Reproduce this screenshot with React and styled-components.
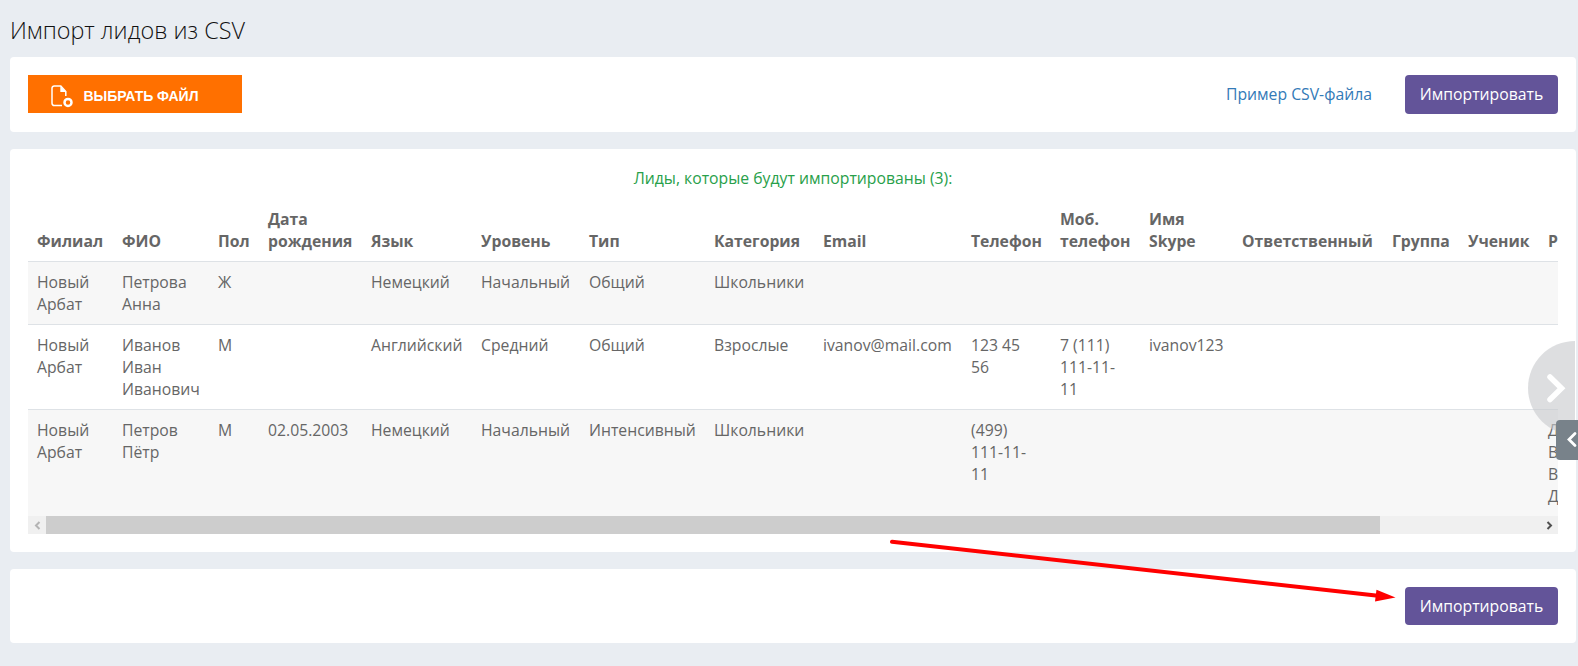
import React from 'react';
import styled, { createGlobalStyle } from 'styled-components';

const columns = [
    { title: 'Филиал', width: 85 },
    { title: 'ФИО', width: 96 },
    { title: 'Пол', width: 50 },
    { title: 'Дата рождения', width: 103 },
    { title: 'Язык', width: 110 },
    { title: 'Уровень', width: 108 },
    { title: 'Тип', width: 125 },
    { title: 'Категория', width: 109 },
    { title: 'Email', width: 148 },
    { title: 'Телефон', width: 89 },
    { title: 'Моб. телефон', width: 89 },
    { title: 'Имя Skype', width: 93 },
    { title: 'Ответственный', width: 150 },
    { title: 'Группа', width: 76 },
    { title: 'Ученик', width: 80 },
    { title: 'Р', width: 200 },
];

const leads = [
    ['Новый Арбат', 'Петрова Анна', 'Ж', '', 'Немецкий', 'Начальный', 'Общий', 'Школьники', '', '', '', '', '', '', '', ''],
    ['Новый Арбат', 'Иванов Иван Иванович', 'М', '', 'Английский', 'Средний', 'Общий', 'Взрослые', 'ivanov@mail.com', '123 45\n56', '7 (111)\n111-11-\n11', 'ivanov123', '', '', '', ''],
    ['Новый Арбат', 'Петров Пётр', 'М', '02.05.2003', 'Немецкий', 'Начальный', 'Интенсивный', 'Школьники', '', '(499)\n111-11-\n11', '', '', '', '', '', 'Д\nВ\nВ\nД'],
];

const FileIcon = () => (
    <svg width="23" height="24" viewBox="0 0 23 24" fill="none" stroke="#fff">
        <path d="M12 21.5H4.2A2.2 2.2 0 0 1 2 19.300V4.200A2.2 2.2 0 0 1 4.200 2H10.800L15.800 7.500V12" strokeWidth="1.500" />
        <path d="M10.300 1.700V8H16.300Z" fill="#fff" stroke="none" />
        <circle cx="18" cy="18.400" r="3.500" fill="#ff7000" strokeWidth="2.500" />
    </svg>
);

const App = () => {
    return (
        <Page>
            <GlobalStyle />
            <Title>Импорт лидов из CSV</Title>
            <Panel $height={75}>
                <Toolbar>
                    <FileButton>
                        <FileIcon />
                        <span>ВЫБРАТЬ ФАЙЛ</span>
                    </FileButton>
                    <Actions>
                        <SampleLink href="#">Пример CSV-файла</SampleLink>
                        <ImportButton $height={39}>Импортировать</ImportButton>
                    </Actions>
                </Toolbar>
            </Panel>
            <Panel $height={403}>
                <Summary>Лиды, которые будут импортированы (3):</Summary>
                <TableScroll>
                    <Table>
                        <colgroup>
                            {columns.map((col) => (
                                <col key={col.title} style={{ width: col.width }} />
                            ))}
                        </colgroup>
                        <thead>
                            <tr>
                                {columns.map((col) => (
                                    <HeadCell key={col.title}>{col.title}</HeadCell>
                                ))}
                            </tr>
                        </thead>
                        <tbody>
                            {leads.map((lead, i) => (
                                <Row key={i}>
                                    {lead.map((value, j) => (
                                        <Cell key={j}>{value}</Cell>
                                    ))}
                                </Row>
                            ))}
                        </tbody>
                    </Table>
                </TableScroll>
                <ScrollBar>
                    <ScrollArrow $color="#b4b4b4">
                        <path d="M11.500 6L8 9.500L11.500 13" />
                    </ScrollArrow>
                    <Thumb />
                    <ScrollArrow $color="#505050">
                        <path d="M7.500 6L11 9.500L7.500 13" />
                    </ScrollArrow>
                </ScrollBar>
            </Panel>
            <Panel $height={74}>
                <Toolbar $end>
                    <ImportButton $height={38}>Импортировать</ImportButton>
                </Toolbar>
            </Panel>
            <ScrollHint>
                <svg width="47" height="94" viewBox="0 0 47 94">
                    <path d="M22 36L33.500 47.200L22 58.500" fill="none" stroke="#fff" strokeWidth="5.500" strokeLinecap="round" />
                </svg>
            </ScrollHint>
            <SideTab>
                <svg width="22" height="40" viewBox="0 0 22 40">
                    <path d="M19 13.500L13 19.500L19 25.500" fill="none" stroke="#fff" strokeWidth="2.800" strokeLinecap="round" />
                </svg>
            </SideTab>
            <Pointer width="1578" height="666" viewBox="0 0 1578 666">
                <path d="M892 541.800L1378 595.800" stroke="#f00" strokeWidth="4" strokeLinecap="round" />
                <path d="M1376.500 589.700L1395.500 597.400L1375 601.500Z" fill="#f00" />
            </Pointer>
        </Page>
    )
}

const GlobalStyle = createGlobalStyle`
* {
    box-sizing: border-box;
}
body {
    margin: 0;
    background: #e9edf2;
    overflow: hidden;
}
`

const Page = styled.div`
position: relative;
width: 1578px;
height: 666px;
padding: 0 2px 0 10px;
display: flex;
flex-direction: column;
gap: 17px;
overflow: hidden;
color: #666;
font-family: "Open Sans", "Noto Sans", sans-serif;
font-size: 15.75px;
line-height: 22px;
`

const Title = styled.h1`
margin: 0;
height: 40px;
padding-top: 14px;
font-size: 23.4px;
line-height: 32px;
font-weight: 300;
color: #111;
`

const Panel = styled.section`
flex: none;
height: ${({ $height }) => $height}px;
padding: 18px;
border-radius: 4px;
background: #fff;
`

const Toolbar = styled.div`
display: flex;
align-items: flex-start;
justify-content: ${({ $end }) => ($end ? 'flex-end' : 'space-between')};
`

const FileButton = styled.button`
display: flex;
align-items: center;
gap: 10.500px;
width: 213.500px;
height: 38px;
padding: 4px 0 0 22px;
border: 0;
background: #ff7000;
color: #fff;
font: bold 14px/20px "Liberation Sans", Arial, sans-serif;
letter-spacing: -0.050px;
white-space: nowrap;
`

const Actions = styled.div`
display: flex;
align-items: flex-start;
gap: 33px;
`

const SampleLink = styled.a`
padding-top: 8px;
color: #337ab7;
text-decoration: none;
white-space: nowrap;
`

const ImportButton = styled.button`
display: flex;
justify-content: center;
width: 153px;
height: ${({ $height }) => $height}px;
padding: 8px 0 0;
border: 0;
border-radius: 4px;
background: #635499;
color: #fff;
font: inherit;
white-space: nowrap;
`

const Summary = styled.div`
height: 32px;
text-align: center;
color: #28a04a;
`

const TableScroll = styled.div`
width: 1530px;
height: 317px;
overflow: hidden;
`

const Table = styled.table`
table-layout: fixed;
width: 1711px;
border-collapse: separate;
border-spacing: 0;
`

const HeadCell = styled.th`
height: 62px;
padding: 9px;
text-align: left;
vertical-align: bottom;
font-weight: 700;
`

const Cell = styled.td`
padding: 9px;
border-top: 1px solid #dee2e6;
vertical-align: top;
white-space: pre-line;
`

const Row = styled.tr`
&:nth-child(odd) {
    background: #f7f7f7;
}
`

const ScrollBar = styled.div`
display: flex;
justify-content: space-between;
height: 18px;
background: #f0f0f0;
`

const ScrollArrow = styled.svg.attrs({ width: 18, height: 18, viewBox: '0 0 18 18' })`
fill: none;
stroke: ${({ $color }) => $color};
stroke-width: 2;
`

const Thumb = styled.div`
width: 1334px;
margin-right: auto;
background: #cdcdcd;
`

const ScrollHint = styled.div`
position: absolute;
top: 341px;
right: 3px;
width: 47px;
height: 94px;
border-radius: 47px 0 0 47px;
background: rgba(200, 202, 205, 0.62);
`

const SideTab = styled.div`
position: absolute;
top: 420px;
right: 0;
width: 22px;
height: 40px;
border-radius: 4px 0 0 4px;
background: #78828a;
`

const Pointer = styled.svg`
position: absolute;
top: 0;
left: 0;
pointer-events: none;
`

export default App;
